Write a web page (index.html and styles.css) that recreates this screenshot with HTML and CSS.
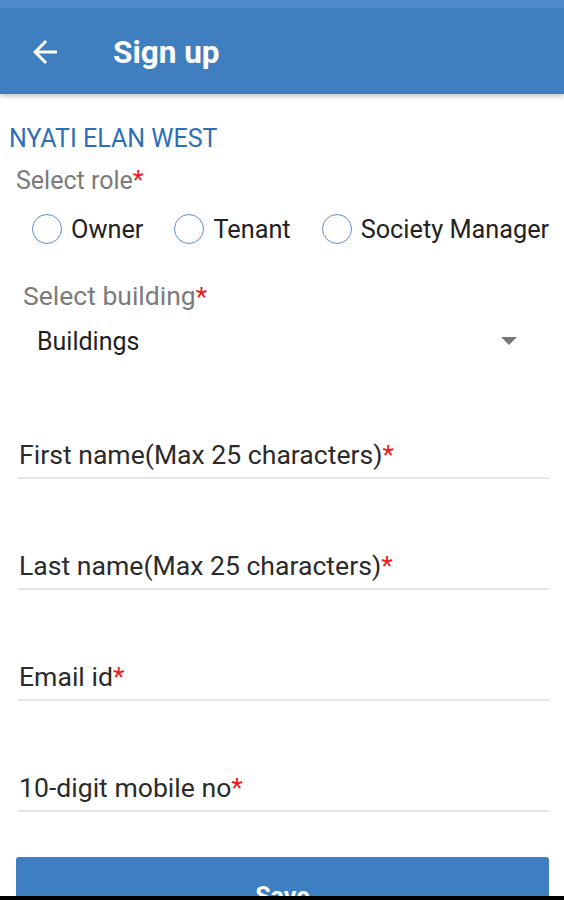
FILE: index.html
```html
<!DOCTYPE html>
<html lang="en">

<head>
    <meta charset="UTF-8">
    <meta name="viewport" content="width=device-width, initial-scale=1.0">
    <title>Sign up</title>
    <link rel="stylesheet" href="styles.css">
</head>

<body>
    <div class="screen">
        <div class="toolbar">
            <svg class="back" width="36" height="36" viewBox="0 0 24 24">
                <path d="M20 11H7.83l5.59-5.59L12 4l-8 8 8 8 1.41-1.41L7.83 13H20v-2z" fill="#fff" />
            </svg>
            <span class="title">Sign up</span>
        </div>

        <div class="form">
            <div class="society">NYATI ELAN WEST</div>
            <div class="label role-label">Select role<span class="req">*</span></div>

            <div class="radios">
                <label class="radio"><span class="circle"></span>Owner</label>
                <label class="radio"><span class="circle"></span>Tenant</label>
                <label class="radio"><span class="circle"></span>Society Manager</label>
            </div>

            <div class="label building-label">Select building<span class="req">*</span></div>
            <div class="spinner">
                <span>Buildings</span>
                <span class="arrow"></span>
            </div>

            <div class="field first"><span>First name(Max 25 characters)<span class="req">*</span></span></div>
            <div class="field"><span>Last name(Max 25 characters)<span class="req">*</span></span></div>
            <div class="field"><span>Email id<span class="req">*</span></span></div>
            <div class="field"><span>10-digit mobile no<span class="req">*</span></span></div>

            <button class="save" type="button">Save</button>
        </div>

        <div class="navbar"></div>
    </div>
</body>

</html>
```

FILE: styles.css
```css
* {
    box-sizing: border-box;
}

body {
    margin: 0;
    font-family: Roboto, "Liberation Sans", sans-serif;
    background: #fff;
}

.screen {
    position: relative;
    width: 564px;
    height: 900px;
    overflow: hidden;
}

.toolbar {
    height: 94px;
    border-top: 8px solid #4d8bc8;
    background: #3f7fc0;
    display: flex;
    align-items: center;
    padding-left: 27px;
    box-shadow: 0 2px 5px rgba(0, 0, 0, 0.25);
    color: #fff;
}

.back {
    margin-right: 50px;
    margin-top: 2px;
}

.title {
    font-size: 31.5px;
    font-weight: bold;
    margin-top: 2px;
}

.form {
    padding-top: 28px;
}

.society {
    padding-left: 9px;
    font-size: 25px;
    color: #2c6fb6;
    line-height: 34px;
}

.label {
    color: #7b7b7b;
    line-height: 30px;
}

.req {
    color: #f01818;
}

.role-label {
    margin-top: 10px;
    padding-left: 16px;
    font-size: 25px;
}

.radios {
    display: flex;
    align-items: center;
    padding-left: 32px;
    margin-top: 18px;
    height: 30px;
    white-space: nowrap;
}

.radio {
    display: flex;
    align-items: center;
    flex-shrink: 0;
    font-size: 25.3px;
    color: #222;
    margin-right: 31px;
}

.radio:last-child {
    margin-right: 0;
}

.radio .circle {
    flex-shrink: 0;
    width: 30px;
    height: 30px;
    border: 1.5px solid #5a8ecb;
    border-radius: 50%;
    margin-right: 9px;
}

.building-label {
    margin-top: 37px;
    padding-left: 23px;
    font-size: 26.5px;
}

.spinner {
    display: flex;
    align-items: center;
    justify-content: space-between;
    padding-left: 37px;
    padding-right: 47px;
    margin-top: 15px;
    font-size: 25px;
    color: #1f1f1f;
    height: 30px;
}

.arrow {
    width: 0;
    height: 0;
    border-left: 8px solid transparent;
    border-right: 8px solid transparent;
    border-top: 8px solid #777;
}

.field {
    margin: 0 15px 0 18px;
    height: 111px;
    display: flex;
    align-items: flex-end;
    border-bottom: 2px solid #e6e6e6;
    font-size: 26.6px;
    color: #2b2b2b;
    padding: 0 0 7px 1px;
}

.field.first {
    height: 123px;
}

.save {
    display: block;
    margin: 45px 15px 0 16px;
    width: 533px;
    height: 78px;
    border: none;
    border-radius: 3px;
    background: #3e7fc1;
    color: #fff;
    font-family: inherit;
    font-size: 25px;
    font-weight: bold;
}

.navbar {
    position: absolute;
    left: 0;
    right: 0;
    bottom: 0;
    height: 4px;
    background: #000;
}
```
